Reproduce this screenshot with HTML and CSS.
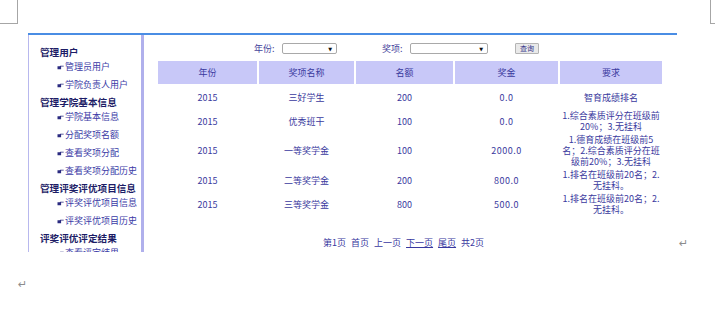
FILE: index.html
```html
<!DOCTYPE html>
<html lang="zh">
<head>
    <meta charset="UTF-8">
    <title>评奖评优管理</title>
    <link rel="stylesheet" href="styles.css">
</head>
<body>
    <div class="marks">
        <div class="mark mark-left"></div>
        <div class="mark mark-right"></div>
    </div>

    <div class="line">
        <div class="shot">
            <!-- left menu -->
            <div class="menu">
                <div class="menu-title">管理用户</div>
                <a class="menu-item" href="#"><svg class="hand" viewBox="0 0 7 5"><path d="M0.5 1.2h2.2l0.6 -0.5h3.4v0.9h-2.6v2.6h-3.6z"/></svg>管理员用户</a>
                <a class="menu-item" href="#"><svg class="hand" viewBox="0 0 7 5"><path d="M0.5 1.2h2.2l0.6 -0.5h3.4v0.9h-2.6v2.6h-3.6z"/></svg>学院负责人用户</a>
                <div class="menu-title">管理学院基本信息</div>
                <a class="menu-item" href="#"><svg class="hand" viewBox="0 0 7 5"><path d="M0.5 1.2h2.2l0.6 -0.5h3.4v0.9h-2.6v2.6h-3.6z"/></svg>学院基本信息</a>
                <a class="menu-item" href="#"><svg class="hand" viewBox="0 0 7 5"><path d="M0.5 1.2h2.2l0.6 -0.5h3.4v0.9h-2.6v2.6h-3.6z"/></svg>分配奖项名额</a>
                <a class="menu-item" href="#"><svg class="hand" viewBox="0 0 7 5"><path d="M0.5 1.2h2.2l0.6 -0.5h3.4v0.9h-2.6v2.6h-3.6z"/></svg>查看奖项分配</a>
                <a class="menu-item" href="#"><svg class="hand" viewBox="0 0 7 5"><path d="M0.5 1.2h2.2l0.6 -0.5h3.4v0.9h-2.6v2.6h-3.6z"/></svg>查看奖项分配历史</a>
                <div class="menu-title">管理评奖评优项目信息</div>
                <a class="menu-item" href="#"><svg class="hand" viewBox="0 0 7 5"><path d="M0.5 1.2h2.2l0.6 -0.5h3.4v0.9h-2.6v2.6h-3.6z"/></svg>评奖评优项目信息</a>
                <a class="menu-item" href="#"><svg class="hand" viewBox="0 0 7 5"><path d="M0.5 1.2h2.2l0.6 -0.5h3.4v0.9h-2.6v2.6h-3.6z"/></svg>评奖评优项目历史</a>
                <div class="menu-title">评奖评优评定结果</div>
                <a class="menu-item" href="#"><svg class="hand" viewBox="0 0 7 5"><path d="M0.5 1.2h2.2l0.6 -0.5h3.4v0.9h-2.6v2.6h-3.6z"/></svg>查看评定结果</a>
            </div>

            <div class="content">
                <div class="search">
                    <span class="label">年份:</span>
                    <span class="select select-year"></span>
                    <span class="label label-award">奖项:</span>
                    <span class="select select-award"></span>
                    <button class="search-btn">查询</button>
                </div>

                <table class="awards">
                    <tr>
                        <th>年份</th>
                        <th>奖项名称</th>
                        <th>名额</th>
                        <th>奖金</th>
                        <th>要求</th>
                    </tr>
                    <tr>
                        <td>2015</td>
                        <td>三好学生</td>
                        <td>200</td>
                        <td class="money">0.0</td>
                        <td class="req">智育成绩排名</td>
                    </tr>
                    <tr>
                        <td>2015</td>
                        <td>优秀班干</td>
                        <td>100</td>
                        <td class="money">0.0</td>
                        <td class="req">1.综合素质评分在班级前<br>20%；3.无挂科</td>
                    </tr>
                    <tr>
                        <td>2015</td>
                        <td>一等奖学金</td>
                        <td>100</td>
                        <td class="money">2000.0</td>
                        <td class="req">1.德育成绩在班级前5<br>名；2.综合素质评分在班<br>级前20%；3.无挂科</td>
                    </tr>
                    <tr>
                        <td>2015</td>
                        <td>二等奖学金</td>
                        <td>200</td>
                        <td class="money">800.0</td>
                        <td class="req">1.排名在班级前20名；2.<br>无挂科。</td>
                    </tr>
                    <tr>
                        <td>2015</td>
                        <td>三等奖学金</td>
                        <td>800</td>
                        <td class="money">500.0</td>
                        <td class="req">1.排名在班级前20名；2.<br>无挂科。</td>
                    </tr>
                </table>

                <div class="pager">
                    <span>第1页</span>
                    <span>首页</span>
                    <span>上一页</span>
                    <a href="#">下一页</a>
                    <a href="#">尾页</a>
                    <span>共2页</span>
                </div>
            </div>
        </div>
        <span class="para-mark">↵</span>
    </div>

    <div class="line line-empty">
        <span class="para-mark">↵</span>
    </div>
</body>
</html>
```

FILE: styles.css
```css
* {
    margin: 0;
    padding: 0;
    box-sizing: border-box;
}

body {
    width: 715px;
    height: 310px;
    overflow: hidden;
    background: #fff;
    font-family: "Noto Sans CJK SC", "Liberation Sans", sans-serif;
}

/* Word page corner marks */
.marks {
    display: flex;
    justify-content: space-between;
    height: 24px;
}

.mark {
    height: 24px;
    border-bottom: 1px solid #a6a6a6;
}

.mark-left {
    width: 18px;
    border-right: 1px solid #a6a6a6;
}

.mark-right {
    width: 5px;
    border-left: 1px solid #a6a6a6;
}

.line {
    display: flex;
    align-items: flex-end;
    padding-left: 28px;
    margin-top: 9px;
}

.line-empty {
    padding-left: 16px;
    margin-top: 27px;
}

.para-mark {
    font-family: "DejaVu Sans", sans-serif;
    font-size: 11px;
    line-height: 12px;
    color: #8c8c8c;
    margin-left: 2px;
    margin-bottom: 2px;
}

/* the pasted screenshot */
.shot {
    display: flex;
    width: 649px;
    height: 219px;
    border-top: 2px solid #4a8de4;
    overflow: hidden;
}

.menu {
    width: 116px;
    flex-shrink: 0;
    border-left: 1px solid #b8b8ee;
    border-right: 3px solid #b0b0ec;
    padding: 9px 0 0 11px;
    overflow: hidden;
}

.menu-title {
    height: 14px;
    padding-top: 2px;
    font-size: 9.6px;
    line-height: 12px;
    font-weight: bold;
    color: #1c1c66;
    white-space: nowrap;
}

.menu-item {
    display: flex;
    align-items: center;
    height: 18px;
    padding-left: 17px;
    font-size: 9px;
    line-height: 12px;
    color: #3a3aa6;
    text-decoration: none;
    white-space: nowrap;
}

.hand {
    width: 7px;
    height: 5px;
    margin-right: 1px;
    fill: #2a2a80;
    flex-shrink: 0;
}

.content {
    flex: 1;
    padding-top: 8px;
}

/* search bar */
.search {
    display: flex;
    align-items: center;
    height: 11px;
    padding-left: 110px;
    font-size: 9px;
    color: #44449c;
}

.label {
    width: 23px;
    white-space: nowrap;
}

.label-award {
    margin-left: 45px;
}

.select {
    position: relative;
    display: inline-block;
    height: 11px;
    margin-left: 5px;
    border: 1px solid #a9a9a9;
    border-radius: 2px;
    background: #fff;
}

.select::after {
    content: "▼";
    position: absolute;
    right: 4px;
    top: 1px;
    font-family: "DejaVu Sans", sans-serif;
    font-size: 5px;
    line-height: 8px;
    color: #111;
}

.select-year {
    width: 55px;
}

.select-award {
    width: 78px;
}

.search-btn {
    width: 24px;
    height: 11px;
    margin-left: 27px;
    border: 1px solid #b4b4b4;
    border-radius: 1px;
    background: #e9e9e9;
    font-family: inherit;
    font-size: 7px;
    line-height: 9px;
    color: #33338a;
}

/* award table */
.awards {
    margin: 5px 0 0 12px;
    border-spacing: 2px;
    font-size: 9px;
    line-height: 11px;
    color: #3a3a9e;
    text-align: center;
}

.awards th {
    height: 23px;
    font-weight: normal;
    background: #c8c8f8;
}

.awards tr {
    height: 22px;
}

.awards th:nth-child(1) { width: 99px; }
.awards th:nth-child(2) { width: 95px; }
.awards th:nth-child(3) { width: 97px; }
.awards th:nth-child(4) { width: 103px; }
.awards th:nth-child(5) { width: 102px; }

.awards td {
    padding: 0;
    vertical-align: middle;
}

.money {
    letter-spacing: 0.5px;
}

.req {
    white-space: nowrap;
}

/* pager */
.pager {
    display: flex;
    gap: 5px;
    margin-top: 20px;
    padding-left: 179px;
    font-size: 9px;
    line-height: 12px;
    color: #3838a0;
}

.pager a {
    color: #3838a0;
    text-decoration: underline;
}
```
